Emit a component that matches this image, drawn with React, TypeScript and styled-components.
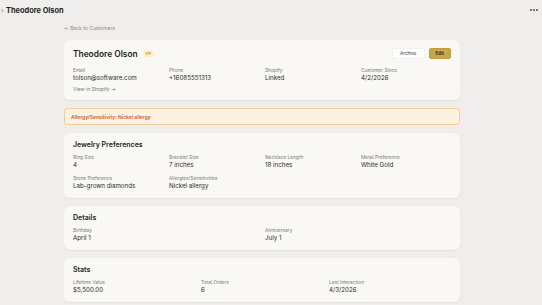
import React from "react";
import styled, { createGlobalStyle } from "styled-components";

const Global = createGlobalStyle`
  html, body { margin: 0; padding: 0; background: #efeeec; }
  body { font-family: Inter, "Noto Sans", "Liberation Sans", sans-serif; color: #262626; -webkit-font-smoothing: antialiased; }
  * { box-sizing: border-box; }
`;

const Page = styled.div`
  width: 542px;
  min-height: 305px;
  background: #efeeec;
`;

const TopBar = styled.div`
  height: 20px;
  display: flex;
  align-items: center;
  padding: 0 2px 0 0;
`;

const Chevron = styled.span`
  font-size: 7px;
  line-height: 7px;
  color: #8a8a8a;
  width: 6px;
  padding-left: 1px;
`;

const PageTitle = styled.h1`
  margin: 0;
  font-size: 7.4px;
  font-weight: 700;
  color: #1e1e1e;
  flex: 1;
`;

const Dots = styled.div`
  display: flex;
  gap: 1.2px;
  padding-right: 2px;
`;

const Dot = styled.span`
  width: 1.8px;
  height: 1.8px;
  border-radius: 50%;
  background: #555;
`;

const Main = styled.main`
  width: 396px;
  margin-left: 64px;
  display: flex;
  flex-direction: column;
  gap: 8px;
`;

const BackLink = styled.div`
  font-size: 5px;
  color: #8a8a8a;
  height: 6px;
  line-height: 6px;
  margin-top: 5px;
  margin-bottom: 1px;
`;

const Card = styled.section<{ $pt?: number; $pb?: number }>`
  background: #f9f8f5;
  border-radius: 6px;
  box-shadow: 0 0.5px 1.5px rgba(0, 0, 0, 0.06);
  padding: ${(p) => p.$pt ?? 7}px 9px ${(p) => p.$pb ?? 8}px;
`;

const HeaderRow = styled.div`
  display: flex;
  align-items: center;
  height: 11px;
`;

const Name = styled.h2`
  margin: 0;
  font-size: 8.4px;
  font-weight: 600;
  color: #1e1e1e;
`;

const Badge = styled.span`
  margin-left: 5px;
  background: #fbf0c9;
  color: #c19a2e;
  font-size: 3.6px;
  font-weight: 600;
  padding: 1.5px 2.5px;
  border-radius: 2px;
  line-height: 4px;
`;

const Spacer = styled.div`
  flex: 1;
`;

const Button = styled.button<{ $primary?: boolean }>`
  height: 11px;
  margin-left: 4px;
  padding: 0 ${(p) => (p.$primary ? 6 : 7)}px;
  font-family: inherit;
  font-size: 4.6px;
  font-weight: ${(p) => (p.$primary ? 600 : 400)};
  color: ${(p) => (p.$primary ? "#2a2414" : "#3a3a3a")};
  background: ${(p) => (p.$primary ? "#c9a64a" : "#ffffff")};
  border: 0.5px solid ${(p) => (p.$primary ? "#c09c40" : "#f1f0ed")};
  border-radius: 2px;
  line-height: 10px;
`;

const SectionTitle = styled.h3`
  margin: 0;
  font-size: 7px;
  font-weight: 600;
  line-height: 9px;
  color: #1e1e1e;
`;

const Grid = styled.div<{ $cols: number; $mt: number }>`
  display: grid;
  grid-template-columns: repeat(${(p) => p.$cols}, 1fr);
  column-gap: 6px;
  row-gap: 5.5px;
  margin-top: ${(p) => p.$mt}px;
`;

const Field = styled.div`
  display: flex;
  flex-direction: column;
  gap: 1px;
`;

const Label = styled.span`
  font-size: 4.8px;
  line-height: 6px;
  color: #7b7b7b;
`;

const Value = styled.span`
  font-size: 6.2px;
  line-height: 8px;
  color: #2a2a2a;
`;

const ShopifyLink = styled.div`
  margin-top: 4px;
  font-size: 5px;
  line-height: 6px;
  color: #777;
`;

const Alert = styled.div`
  height: 17px;
  display: flex;
  align-items: center;
  padding: 0 6px;
  background: #fcf2e2;
  border: 0.5px solid #f1cd95;
  border-radius: 3px;
  font-size: 5px;
  font-weight: 600;
  color: #c8641f;
`;

type F = [string, string];

const Fields = ({ items, cols, mt }: { items: F[]; cols: number; mt: number }) => (
  <Grid $cols={cols} $mt={mt}>
    {items.map(([l, v]) => (
      <Field key={l}>
        <Label>{l}</Label>
        <Value>{v}</Value>
      </Field>
    ))}
  </Grid>
);

export default function App() {
  return (
    <Page>
      <Global />
      <TopBar>
        <Chevron>›</Chevron>
        <PageTitle>Theodore Olson</PageTitle>
        <Dots>
          <Dot />
          <Dot />
          <Dot />
        </Dots>
      </TopBar>
      <Main>
        <BackLink>← Back to Customers</BackLink>
        <Card $pt={8} $pb={8}>
          <HeaderRow>
            <Name>Theodore Olson</Name>
            <Badge>VIP</Badge>
            <Spacer />
            <Button>Archive</Button>
            <Button $primary>Edit</Button>
          </HeaderRow>
          <Fields
            cols={4}
            mt={8}
            items={[
              ["Email", "tolson@software.com"],
              ["Phone", "+16085551313"],
              ["Shopify", "Linked"],
              ["Customer Since", "4/2/2026"],
            ]}
          />
          <ShopifyLink>View in Shopify →</ShopifyLink>
        </Card>
        <Alert>Allergy/Sensitivity: Nickel allergy</Alert>
        <Card>
          <SectionTitle>Jewelry Preferences</SectionTitle>
          <Fields
            cols={4}
            mt={5}
            items={[
              ["Ring Size", "4"],
              ["Bracelet Size", "7 inches"],
              ["Necklace Length", "18 inches"],
              ["Metal Preference", "White Gold"],
              ["Stone Preference", "Lab-grown diamonds"],
              ["Allergies/Sensitivities", "Nickel allergy"],
            ]}
          />
        </Card>
        <Card>
          <SectionTitle>Details</SectionTitle>
          <Fields
            cols={2}
            mt={5}
            items={[
              ["Birthday", "April 1"],
              ["Anniversary", "July 1"],
            ]}
          />
        </Card>
        <Card>
          <SectionTitle>Stats</SectionTitle>
          <Fields
            cols={3}
            mt={5}
            items={[
              ["Lifetime Value", "$5,500.00"],
              ["Total Orders", "6"],
              ["Last Interaction", "4/3/2026"],
            ]}
          />
        </Card>
      </Main>
    </Page>
  );
}
